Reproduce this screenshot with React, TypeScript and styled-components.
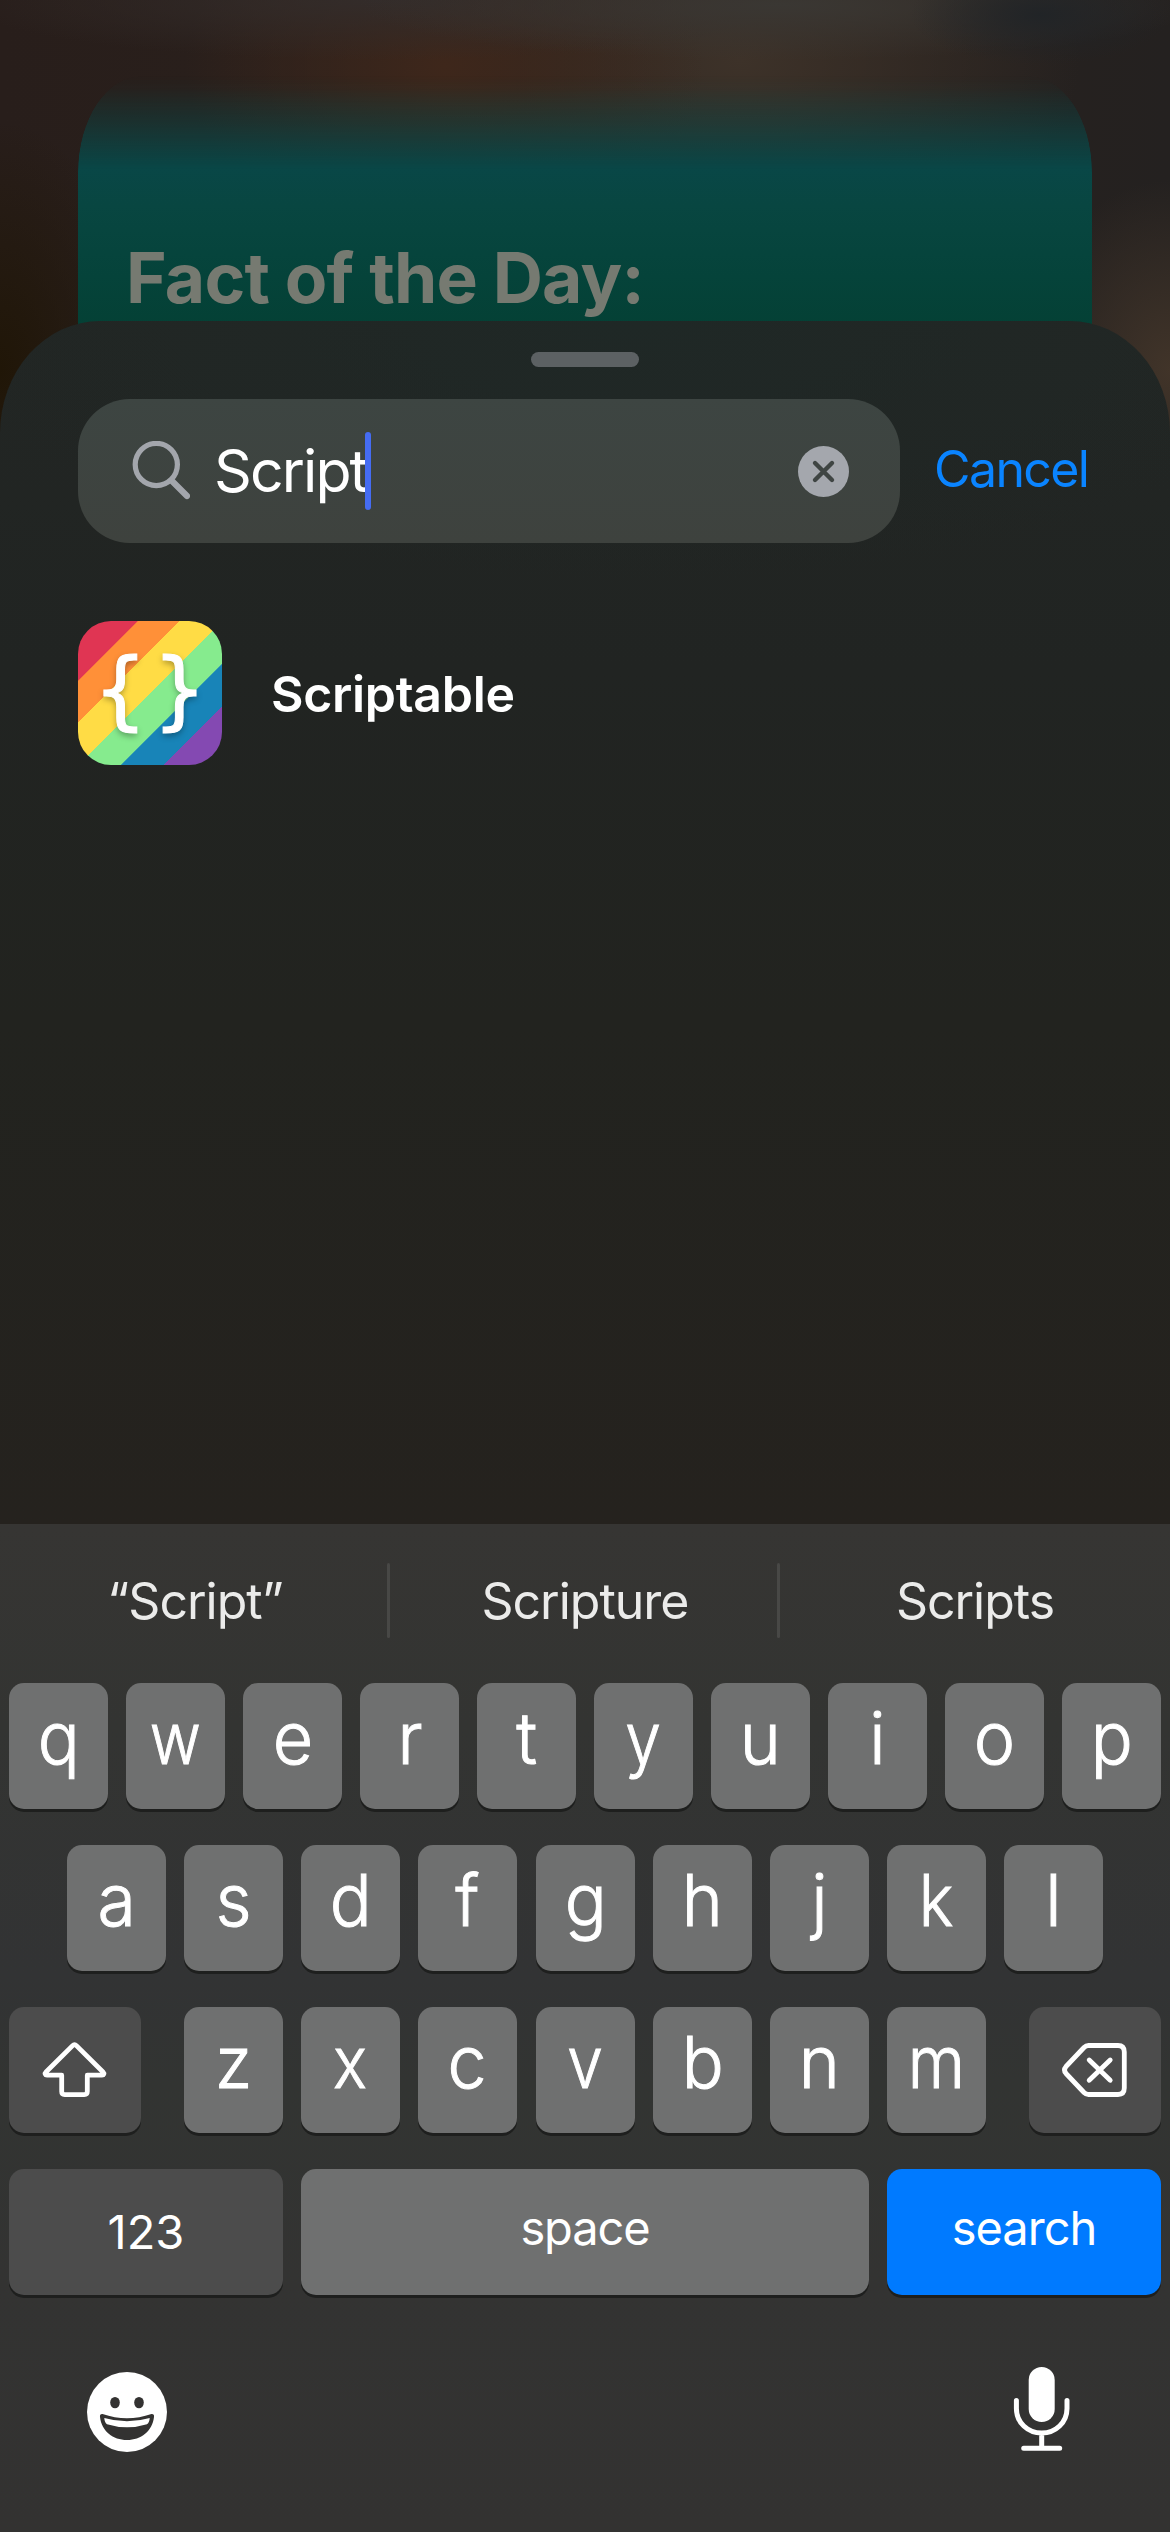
import React from 'react';
import styled, { createGlobalStyle } from 'styled-components';

const Global = createGlobalStyle`
  * { box-sizing: border-box; }
  html, body { margin: 0; padding: 0; background: #262220; }
  body { font-family: Inter, "Liberation Sans", sans-serif; color: #fff; }
  button { border: 0; margin: 0; padding: 0; background: none; color: inherit; font: inherit; }
`;

const Screen = styled.div`
  width: 1170px;
  height: 2532px;
  overflow: hidden;
  display: flex;
  flex-direction: column;
  background:
    radial-gradient(ellipse 130px 50px at 1040px 15px, #212427, rgba(33, 36, 39, 0)),
    radial-gradient(ellipse 420px 55px at 780px 5px, #3a3733, rgba(58, 55, 51, 0)),
    radial-gradient(ellipse 420px 60px at 380px 0, #332c2a, rgba(51, 44, 42, 0)),
    radial-gradient(ellipse 260px 180px at 445px 66px, #3e271b, rgba(62, 39, 27, 0)),
    radial-gradient(ellipse 340px 220px at 740px 60px, #3d3229, rgba(61, 50, 41, 0)),
    radial-gradient(ellipse 140px 250px at 0 370px, #201607, rgba(32, 22, 7, 0)),
    radial-gradient(ellipse 150px 190px at 1170px 370px, #413429, rgba(65, 52, 41, 0)),
    linear-gradient(90deg, #281e1b, #2b211c 50%, #242120);
`;

const Backdrop = styled.div`
  height: 321px;
  flex: none;
  padding: 76px 78px 0;
`;

const Widget = styled.div`
  height: 340px;
  padding: 152px 0 0 48px;
  border-radius: 64px 64px 0 0 / 96px 96px 0 0;
  background: linear-gradient(180deg, #0a4a4a 0, #094747 90px, #084641 130px, #05433a 200px, #044034 260px);
  mask-image: linear-gradient(180deg, transparent 0, rgba(0,0,0,.07) 12px, rgba(0,0,0,.25) 28px, rgba(0,0,0,.48) 50px, rgba(0,0,0,.77) 74px, #000 93px);
`;

const WidgetTitle = styled.div`
  font-size: 69.5px;
  line-height: 100px;
  font-weight: 700;
  letter-spacing: -0.8px;
  color: #767a71;
  white-space: nowrap;
`;

const Sheet = styled.main`
  position: relative;
  flex: 1;
  display: flex;
  flex-direction: column;
  border-radius: 100px 100px 0 0 / 112px 112px 0 0;
  background:
    radial-gradient(ellipse 700px 260px at 640px 0, #1f2826, rgba(31, 40, 38, 0)),
    linear-gradient(180deg, #222624 0, #212422 350px, #22231f 700px, #25221e 1202px);
`;

const Grabber = styled.div`
  width: 108px;
  height: 15px;
  margin: 31px auto 32px;
  border-radius: 8px;
  background: #5c6163;
  flex: none;
`;

const SearchRow = styled.div`
  display: flex;
  align-items: center;
  height: 144px;
  padding-left: 78px;
`;

const Field = styled.div`
  display: flex;
  align-items: center;
  width: 822px;
  height: 144px;
  padding: 0 51px 0 52px;
  border-radius: 52px;
  background: linear-gradient(180deg, #3d4542, #3e423e);
`;

const Query = styled.span`
  width: 153px;
  margin-left: 24px;
  font-size: 59px;
  line-height: 78px;
  letter-spacing: -1.9px;
  white-space: nowrap;
`;

const Caret = styled.i`
  width: 6px;
  height: 78px;
  margin-left: -2px;
  border-radius: 3px;
  background: #456cf2;
`;

const Clear = styled.button`
  display: flex;
  margin-left: auto;
`;

const Cancel = styled.button`
  margin-left: 34px;
  padding-bottom: 4px;
  font-size: 50px;
  line-height: 60px;
  letter-spacing: -1.6px;
  color: #0a84ff;
`;

const Result = styled.div`
  display: flex;
  align-items: center;
  gap: 49px;
  padding: 78px 0 0 78px;
`;

const AppIcon = styled.div`
  display: flex;
  justify-content: center;
  align-items: center;
  gap: 8px;
  width: 144px;
  height: 144px;
  padding-bottom: 7px;
  border-radius: 33px;
  background: linear-gradient(135deg,
    #e03553 0 42.1px, #ff9038 42.6px 71.5px, #ffdc45 72px 101.9px,
    #86eb8e 102.4px 131.9px, #1884b8 132.4px 162px, #8449b2 162.5px);
  font-family: "DejaVu Sans Mono", monospace;
  font-size: 85px;
  line-height: 137px;
  -webkit-text-stroke: 1px #fff;
  text-shadow: 0 3px 6px rgba(0, 0, 0, 0.35);
`;

const AppName = styled.span`
  padding-top: 2px;
  font-size: 50px;
  line-height: 60px;
  font-weight: 600;
  letter-spacing: -0.3px;
`;

const Keyboard = styled.section`
  flex: none;
  height: 1008px;
  background: linear-gradient(180deg, #363533 0, #333432 200px, #323334 450px, #323432 560px, #333332 760px, #333231 1008px);
`;

const Suggestions = styled.div`
  display: grid;
  grid-template-columns: repeat(3, 390px);
  height: 159px;
  padding-top: 39px;
`;

const Suggestion = styled.div<{ $divided?: boolean }>`
  position: relative;
  display: flex;
  align-items: center;
  justify-content: center;
  height: 75px;
  padding-top: 1px;
  font-size: 50px;
  line-height: 75px;
  letter-spacing: -1px;
  color: #ebebea;
  &::after {
    content: "";
    display: ${(p) => (p.$divided ? 'block' : 'none')};
    position: absolute;
    right: 0;
    top: 0;
    width: 3px;
    height: 75px;
    border-radius: 2px;
    background: #484846;
  }
`;

const Rows = styled.div`
  display: flex;
  flex-direction: column;
  gap: 36px;
`;

const Row = styled.div<{ $inset?: number }>`
  display: flex;
  gap: 18px;
  padding: 0 ${(p) => p.$inset ?? 9}px;
`;

const Key = styled.button<{ $w?: number; $tone?: 'dark' | 'blue'; $before?: number }>`
  display: flex;
  flex: none;
  align-items: center;
  justify-content: center;
  width: ${(p) => p.$w ?? 99}px;
  height: 126px;
  margin-left: ${(p) => p.$before ?? 0}px;
  border-radius: 15px;
  background: ${(p) => (p.$tone === 'blue' ? '#007aff' : p.$tone === 'dark' ? '#4c4c4c' : '#6f7070')};
  box-shadow: 0 3px 0 #1e1f1e;
`;

const Letter = styled.span<{ $stretch: number }>`
  padding-bottom: 17px;
  font-size: 72px;
  font-weight: 300;
  line-height: 90px;
  -webkit-text-stroke: 1px #fff;
  transform: scaleX(${(p) => p.$stretch});
`;

const KeyLabel = styled.span<{ $raise?: number; $tracking?: number }>`
  padding-bottom: ${(p) => p.$raise ?? 0}px;
  font-size: 47px;
  line-height: 60px;
  letter-spacing: ${(p) => p.$tracking ?? 0}px;
`;

const Dock = styled.div`
  display: flex;
  justify-content: space-between;
  padding: 67px 78px 0 77px;
`;

const SearchIcon = () => (
  <svg width="60" height="60" viewBox="130 441 60 60" fill="none" stroke="#a3a6ac" strokeLinecap="round">
    <circle cx="156.3" cy="464.5" r="21.1" strokeWidth="5.2" />
    <path d="M172 481 L187 496" strokeWidth="6.2" />
  </svg>
);

const ClearIcon = () => (
  <svg width="51" height="51" viewBox="0 0 51 51">
    <circle cx="25.5" cy="25.5" r="25.5" fill="#a4a7ad" />
    <path d="M17 17 L34 34 M34 17 L17 34" stroke="#3f4543" strokeWidth="4.4" strokeLinecap="round" />
  </svg>
);

const ShiftIcon = () => (
  <svg width="100" height="100" viewBox="25 2020 100 100" fill="none" stroke="#fff" strokeWidth="4.8" strokeLinejoin="round">
    <path d="M72.6 2045.6 Q74.5 2043.7 76.4 2045.6 L103 2072 C104.600 2073.600 103.800 2075.200 102 2075.200 H87.3 V2091.6 Q87.3 2094.6 84.3 2094.6 H64.7 Q61.7 2094.6 61.7 2091.6 V2075.2 H47 C45.200 2075.200 44.400 2073.600 46 2072 Z" />
  </svg>
);

const DeleteIcon = () => (
  <svg width="100" height="100" viewBox="1045 2020 100 100" fill="none" stroke="#fff" strokeWidth="4.8" strokeLinecap="round" strokeLinejoin="round">
    <path d="M1088.5 2045.5 H1118 Q1124.3 2045.5 1124.3 2052 V2088 Q1124.3 2094.5 1118 2094.5 H1088.5 Q1086 2094.5 1084 2092.5 L1066 2073.5 Q1063 2070 1066 2066.5 L1084 2047.5 Q1086 2045.5 1088.5 2045.5 Z" />
    <path d="M1089.2 2060 L1110.2 2080.300 M1110.2 2060 L1089.2 2080.300" />
  </svg>
);

const EmojiIcon = () => (
  <svg width="100" height="100" viewBox="77 2362 100 100">
    <circle cx="127" cy="2412" r="40" fill="#fff" />
    <g fill="#333231">
      <ellipse cx="115" cy="2402.6" rx="4.8" ry="5.7" />
      <ellipse cx="139" cy="2402.6" rx="4.8" ry="5.7" />
      <path d="M102.500 2414 Q127 2422.500 151.500 2414 Q154.500 2413.800 154 2417 C152.500 2431 141 2440 127 2440 C113 2440 101.500 2431 100 2417 Q99.500 2413.800 102.500 2414 Z" />
    </g>
    <path d="M104.3 2418 Q127 2424.600 149.700 2418 Q149.500 2422.500 147 2424.200 Q127 2430.400 107 2424.200 Q104.500 2422.500 104.300 2418 Z" fill="#fff" />
  </svg>
);

const MicIcon = () => (
  <svg width="100" height="100" viewBox="992 2362 100 100" fill="none" stroke="#fff" strokeWidth="5" strokeLinecap="round">
    <rect x="1028.7" y="2367" width="26" height="55" rx="13" fill="#fff" stroke="none" />
    <path d="M1016.4 2400.500 V2408.500 C1016.4 2422.500 1027.700 2433 1041.7 2433 C1055.700 2433 1067 2422.500 1067 2408.500 V2400.500 M1041.700 2433 V2447 M1023.700 2448.300 H1059.700" />
  </svg>
);

const STRETCH: Record<string, number> = { w: 0.87, m: 0.91, y: 0.89, x: 0.89, v: 0.89, k: 0.91, z: 0.95 };

// The middle column is rounded up by one pixel in the two inset rows.
const Letters = ({ keys, wide }: { keys: string; wide?: string }) => (
  <>
    {keys.split('').map((c) => (
      <Key key={c} $before={c === wide ? 1 : 0}>
        <Letter $stretch={STRETCH[c] ?? 0.97}>{c}</Letter>
      </Key>
    ))}
  </>
);

export default function App() {
  return (
    <>
      <Global />
      <Screen>
        <Backdrop>
          <Widget>
            <WidgetTitle>Fact of the Day:</WidgetTitle>
          </Widget>
        </Backdrop>
        <Sheet>
          <Grabber />
          <SearchRow>
            <Field>
              <SearchIcon />
              <Query>Script</Query>
              <Caret />
              <Clear aria-label="Clear text"><ClearIcon /></Clear>
            </Field>
            <Cancel>Cancel</Cancel>
          </SearchRow>
          <Result>
            <AppIcon><span>{'{'}</span><span>{'}'}</span></AppIcon>
            <AppName>Scriptable</AppName>
          </Result>
        </Sheet>
        <Keyboard>
          <Suggestions>
            <Suggestion $divided>“Script”</Suggestion>
            <Suggestion $divided>Scripture</Suggestion>
            <Suggestion>Scripts</Suggestion>
          </Suggestions>
          <Rows>
            <Row><Letters keys="qwertyuiop" /></Row>
            <Row $inset={67}><Letters keys="asdfghjkl" wide="g" /></Row>
            <Row>
              <Key $w={132} $tone="dark" aria-label="Shift"><ShiftIcon /></Key>
              <Row $inset={25}><Letters keys="zxcvbnm" wide="v" /></Row>
              <Key $w={132} $tone="dark" aria-label="Delete"><DeleteIcon /></Key>
            </Row>
            <Row>
              <Key $w={274} $tone="dark"><KeyLabel>123</KeyLabel></Key>
              <Key $w={568}><KeyLabel $raise={9} $tracking={-1.1}>space</KeyLabel></Key>
              <Key $w={274} $tone="blue"><KeyLabel $raise={9} $tracking={-1}>search</KeyLabel></Key>
            </Row>
          </Rows>
          <Dock>
            <EmojiIcon />
            <MicIcon />
          </Dock>
        </Keyboard>
      </Screen>
    </>
  );
}
